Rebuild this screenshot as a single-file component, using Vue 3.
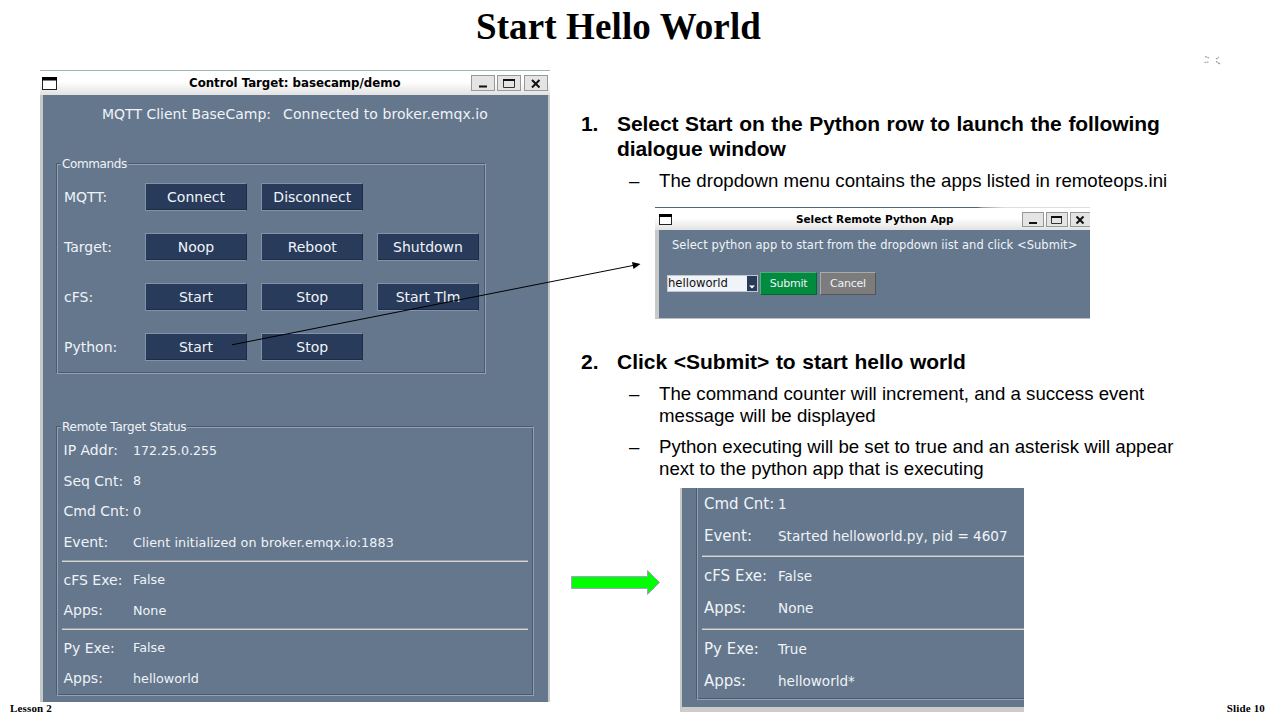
<script setup>
const commands = [
  { label: 'MQTT:', actions: ['Connect', 'Disconnect'] },
  { label: 'Target:', actions: ['Noop', 'Reboot', 'Shutdown'] },
  { label: 'cFS:', actions: ['Start', 'Stop', 'Start Tlm'] },
  { label: 'Python:', actions: ['Start', 'Stop'] },
]
const status = [
  [['IP Addr:', '172.25.0.255'], ['Seq Cnt:', '8'], ['Cmd Cnt:', '0'], ['Event:', 'Client initialized on broker.emqx.io:1883']],
  [['cFS Exe:', 'False'], ['Apps:', 'None']],
  [['Py Exe:', 'False'], ['Apps:', 'helloworld']],
]
const result = [
  [['Cmd Cnt:', '1'], ['Event:', 'Started helloworld.py, pid = 4607']],
  [['cFS Exe:', 'False'], ['Apps:', 'None']],
  [['Py Exe:', 'True'], ['Apps:', 'helloworld*']],
]
</script>

<template>
  <div class="slide">
    <h1 class="title">Start Hello World</h1>
    <main class="main">
      <section class="window control">
        <header class="bar">
          <svg class="menu" width="15" height="13" viewBox="0 0 15 13"><rect x=".5" y=".5" width="14" height="12" fill="#fff" stroke="#222" /><rect width="15" height="3.5" /></svg>
          <span class="caption">Control Target: basecamp/demo</span>
          <span class="tools">
            <svg class="tool" viewBox="0 0 24 16"><rect x=".5" y=".5" width="23" height="15" /><path class="ink" d="M8 11.5h8" /></svg>
            <svg class="tool" viewBox="0 0 24 16"><rect x=".5" y=".5" width="23" height="15" /><path class="thin" d="M6.500 4.500h11v8h-11z" /><path class="ink" d="M6 5h12" /></svg>
            <svg class="tool" viewBox="0 0 24 16"><rect x=".5" y=".5" width="23" height="15" /><path class="ink" d="M8 5l7.500 7.500M15.500 5L8 12.500" /></svg>
          </span>
        </header>
        <div class="panel">
          <p class="broker"><span>MQTT Client BaseCamp:</span><span>Connected to broker.emqx.io</span></p>
          <div class="frame commands">
            <span class="legend">Commands</span>
            <div v-for="row in commands" :key="row.label" class="command">
              <span class="name">{{ row.label }}</span>
              <button v-for="action in row.actions" :key="action" class="button">{{ action }}</button>
            </div>
          </div>
          <div class="frame status">
            <span class="legend">Remote Target Status</span>
            <div v-for="(group, i) in status" :key="i" class="group">
              <div v-for="row in group" :key="row[0]" class="entry"><span class="key">{{ row[0] }}</span><span class="value">{{ row[1] }}</span></div>
            </div>
          </div>
        </div>
      </section>

      <section class="notes">
        <h2 class="step first"><span class="num">1.</span><span>Select Start on the Python row to launch the following<br />dialogue window</span></h2>
        <p class="sub s1"><span class="dash">–</span><span>The dropdown menu contains the apps listed in remoteops.ini</span></p>

        <div class="window dialog">
          <header class="bar">
            <svg class="menu" width="13" height="11" viewBox="0 0 13 11"><rect x=".5" y=".5" width="12" height="10" fill="#fff" stroke="#222" /><rect width="13" height="3" /></svg>
            <span class="caption">Select Remote Python App</span>
            <span class="tools">
              <svg class="tool" viewBox="0 0 22 15"><rect x=".5" y=".5" width="21" height="14" /><path class="ink" d="M7 11h8" /></svg>
              <svg class="tool" viewBox="0 0 22 15"><rect x=".5" y=".5" width="21" height="14" /><path class="thin" d="M5.500 4.500h10v7h-10z" /><path class="ink" d="M5 5h11" /></svg>
              <svg class="tool" viewBox="0 0 22 15"><rect x=".5" y=".5" width="23" height="14" /><path class="ink" d="M6.500 4.500l7 7M13.500 4.500l-7 7" /></svg>
            </span>
          </header>
          <div class="panel">
            <p class="prompt">Select python app to start from the dropdown iist and click &lt;Submit&gt;</p>
            <div class="form">
              <span class="select"><span class="choice">helloworld</span><span class="drop"><svg width="6" height="4" viewBox="0 0 6 4"><path d="M0 .5h6L3 3.500z" fill="#fff" /></svg></span></span>
              <button class="act submit">Submit</button>
              <button class="act cancel">Cancel</button>
            </div>
          </div>
        </div>

        <h2 class="step second"><span class="num">2.</span><span>Click &lt;Submit&gt; to start hello world</span></h2>
        <p class="sub s2"><span class="dash">–</span><span>The command counter will increment, and a success event<br />message will be displayed</span></p>
        <p class="sub s3"><span class="dash">–</span><span>Python executing will be set to true and an asterisk will appear<br />next to the python app that is executing</span></p>

        <div class="result">
          <div class="cut">
            <div v-for="(group, i) in result" :key="i" class="group">
              <div v-for="row in group" :key="row[0]" class="entry"><span class="key">{{ row[0] }}</span><span class="value">{{ row[1] }}</span></div>
            </div>
          </div>
        </div>
      </section>
    </main>
    <footer class="foot"><span>Lesson 2</span><span>Slide 10</span></footer>

    <svg class="overlay" width="1280" height="720" viewBox="0 0 1280 720">
      <path d="M232 344.800L634 265.300" stroke="#000" fill="none" />
      <path d="M640.500 264L632 262l1.500 7z" />
      <path d="M571.500 576.500h76v-6l12 12-12 12v-6h-76z" fill="#0f0" stroke="#a79ccf" />
      <path d="M1205 56.500l4 1.500M1204.500 62.500l4-.5M1216 59l3-2M1216 61.500l4 2.500" stroke="#999" fill="none" stroke-width="1.200" stroke-dasharray="2 .6" />
    </svg>
  </div>
</template>

<style>
body { margin: 0; background: #fff; }
</style>

<style scoped>
.slide { position: relative; width: 1280px; height: 720px; overflow: hidden; display: flex; flex-direction: column; background: #fff; color: #000; font-family: "Liberation Sans", Arial, sans-serif; }
.slide * { box-sizing: border-box; }
h1, h2, p { margin: 0; }
span, button { white-space: nowrap; }
.title { height: 70px; width: 1237px; text-align: center; font: bold 37px/53px "Liberation Serif", serif; letter-spacing: .12px; }
.main { display: flex; height: 632px; }
.overlay { position: absolute; left: 0; top: 0; pointer-events: none; }

.window, .result { font-family: "DejaVu Sans", sans-serif; color: #f0f3f7; }
.window { display: flex; flex-direction: column; }
.bar { display: flex; align-items: center; background: linear-gradient(#fff 45%, #e2e2e2); color: #000; }
.caption { font-weight: bold; }
.tools { display: flex; margin-left: auto; }
.tool { display: block; overflow: hidden; }
.tool rect { fill: #e4e4e4; stroke: #959a95; }
.ink { fill: none; stroke: #111; stroke-width: 2; }
.thin { fill: none; stroke: #333; stroke-width: 1; }
.panel { background: #64778d; flex: 1; display: flex; flex-direction: column; }

.control { width: 510px; height: 632px; margin-left: 40px; }
.control .bar { height: 25px; border-top: 1px solid #9fb5ad; padding: 0 2px; }
.control .caption { font-size: 11.800px; margin-left: 132px; letter-spacing: -.03px; }
.control .tools { gap: 2.500px; margin-right: .5px; }
.control .menu { margin-top: 1px; }
.control .tool { width: 24px; height: 16px; }
.control .panel { border-left: 3px solid #c7c9c7; border-right: 2px solid #c9c8c8; }
.broker { display: flex; gap: 12px; margin-left: 59px; font-size: 14px; line-height: 38px; height: 68px; }
.broker span + span { letter-spacing: .080px; }
.frame { position: relative; margin-left: 13px; border: 1px solid; border-color: #4b5b6e #93a1b0 #93a1b0 #4b5b6e; box-shadow: inset 1px 1px #93a1b0, inset -1px -1px #4b5b6e; }
.legend { position: absolute; left: 4px; top: -8px; padding: 0 1px; background: #64778d; font-size: 12px; line-height: 16px; letter-spacing: -.25px; }
.commands { width: 430px; height: 211px; padding-top: 8px; }
.commands .legend { letter-spacing: -.38px; }
.command { display: flex; align-items: center; height: 50px; padding-left: 7px; }
.name { width: 81px; font-size: 14px; flex: none; }
.button { width: 102px; height: 28px; margin-right: 14.250px; padding: 0; border: 1px solid; border-color: #8292a5 #1f2e48 #8292a5 #8292a5; background: #283b5b; color: #f0f3f7; font: 14px "DejaVu Sans", sans-serif; text-align: center; box-shadow: inset 0 -1px #1f2e48; flex: none; }
.button + .button + .button { margin-left: -.5px; }
.status { width: 478px; height: 270px; margin-top: 52px; padding-top: 8px; }
.group + .group { border-top: 1px solid #9a9fa6; box-shadow: inset 0 1px #d6d6d4; }
.entry { display: flex; align-items: center; }
.status .group { margin: 0 5px; }
.status .entry { height: 30.600px; }
.status .group:nth-of-type(1) { height: 125px; }
.status .group + .group { height: 68px; padding-top: 3.500px; }
.key { font-size: 14px; width: 71px; padding-left: 1.500px; flex: none; }
.value { font-size: 12.750px; }
.status .group:nth-of-type(1) .entry:first-of-type .value { font-size: 12.600px; }
.status .group:nth-of-type(1) .entry:last-child .value { letter-spacing: .070px; }

.notes { margin-left: 31px; width: 680px; display: flex; flex-direction: column; }
.step { display: flex; font-size: 21px; line-height: 25px; font-weight: bold; letter-spacing: -.080px; word-spacing: .9px; }
.num { width: 36px; }
.first { margin-top: 41px; }
.second { margin-top: 30px; letter-spacing: -.03px; }
.sub { display: flex; font-size: 18.670px; line-height: 22px; margin-left: 48px; }
.dash { width: 30px; }
.s1 { margin-top: 9px; }
.s2 { margin-top: 9px; }
.s3 { margin-top: 9px; }

.dialog { width: 435px; height: 112px; margin-left: 74px; margin-top: 15px; overflow: hidden; flex: none; }
.dialog .bar { height: 23px; border-top: 1px solid; border-image: linear-gradient(90deg, #53657c 74%, #999 75%, #ddd 80%) 1; padding-left: 4px; }
.dialog .caption { font-size: 10.500px; margin-left: 124px; letter-spacing: -.03px; }
.dialog .tools { gap: 2px; margin-top: 1px; margin-right: -2px; }
.dialog .menu { margin-top: 1px; }
.dialog .tool { width: 22px; height: 15px; }
.dialog .panel { border-left: 4px solid #c7c9c7; border-bottom: 1px solid #b8bec6; }
.prompt { font-size: 11.500px; line-height: 30px; margin-left: 13px; height: 41px; white-space: nowrap; letter-spacing: .035px; }
.form { display: flex; align-items: center; height: 24px; margin-left: 8px; }
.select { display: flex; width: 91px; height: 17px; border: 1px solid #c3c8cf; background: #f0f3f7; color: #111; font-size: 11.600px; line-height: 15px; margin-right: 2px; }
.choice { flex: 1; }
.drop { width: 10px; background: #283b5b; display: flex; align-items: flex-end; justify-content: center; padding-bottom: 2px; }
.act { height: 23px; padding: 0; border: 1px solid; font: 11px "DejaVu Sans", sans-serif; letter-spacing: -.25px; color: #f0f3f7; }
.submit { width: 57px; background: #008b3f; border-color: #55aa80 #056630 #056630 #55aa80; margin-right: 3px; }
.cancel { width: 56px; background: #7c7c7c; border-color: #aaa #555 #555 #aaa; }

.result { width: 344px; height: 224px; margin-left: 99px; margin-top: 8px; background: #64778d; border-left: 2px solid #c7c9c7; border-bottom: 5px solid #ccc; flex: none; padding-left: 14px; }
.cut { height: 212px; border-left: 1px solid #4b5b6e; border-bottom: 1px solid #93a1b0; box-shadow: inset 1px 0 #93a1b0, inset 0 -1px #4b5b6e; }
.result .entry { height: 32.600px; }
.result .group { margin-left: 5px; }
.result .group:nth-of-type(1) { height: 67px; }
.result .group:nth-of-type(1) .entry { position: relative; top: -.5px; }
.result .group + .group { height: 73px; padding-top: 3.500px; }
.result .key { font-size: 15px; width: 76px; padding-left: 2px; }
.result .value { font-size: 13.570px; }

.foot { position: absolute; left: 10px; right: 15px; top: 702px; display: flex; justify-content: space-between; font: bold 11px/13px "Liberation Serif", serif; letter-spacing: .15px; }
</style>
